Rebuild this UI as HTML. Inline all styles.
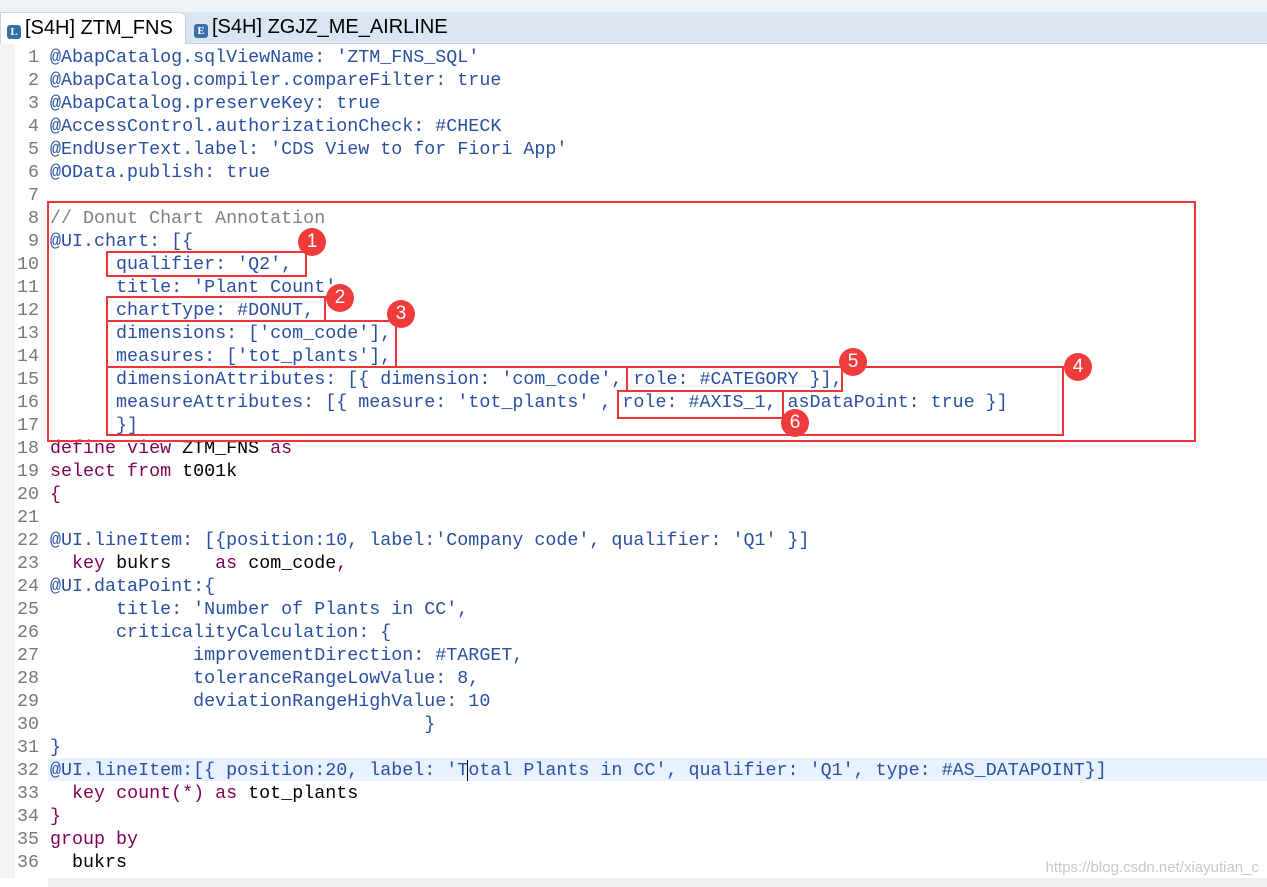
<!DOCTYPE html>
<html><head><meta charset="utf-8"><style>
body{margin:0;width:1267px;height:887px;overflow:hidden;background:#fff;position:relative;font-family:"Liberation Sans",sans-serif}
.top{position:absolute;left:0;top:0;width:1267px;height:12px;background:#eef1f6}
.tabbar{position:absolute;left:0;top:12px;width:1267px;height:31px;background:#dbe5f1;border-bottom:1px solid #c9d4e2}
.tab{position:absolute;top:0;height:31px;font-size:20px;line-height:31px;color:#000}
.t1{left:0;width:184px;background:#fff;border:1px solid #c9d4e2;border-bottom:none;border-radius:0 6px 0 0}
.ic{display:inline-block;width:14px;height:14px;border-radius:3px;background:#3a6ea8;color:#fff;font-size:11px;line-height:14px;text-align:center;vertical-align:-1px;margin:0 4px 0 6px;font-family:"Liberation Serif",serif;font-weight:bold}
.gut{position:absolute;left:0;top:44px;width:15px;height:834px;background:#f3f3f3}
.code{position:absolute;left:0;top:46px;font-family:"Liberation Mono",monospace;font-size:18.35px;line-height:23px;white-space:pre;margin:0}
.ln{position:absolute;left:0;top:46px;width:39px;text-align:right;font-family:"Liberation Mono",monospace;font-size:18.35px;line-height:23px;color:#787878;white-space:pre;margin:0}
.a{color:#2a4fa0}.k{color:#7f0055}.c{color:#808080}
.hl{position:absolute;left:48px;top:758px;width:1219px;height:23px;background:#e8f2fe}
.box{position:absolute;border:2.5px solid #f0353a}
.n{position:absolute;width:28px;height:28px;border-radius:50%;background:#ef3b3b;color:#fff;font-size:19px;line-height:28px;text-align:center}
.sb{position:absolute;left:48px;top:878px;width:1219px;height:9px;background:#f0f0f0}
</style></head><body>
<div class="top"></div>
<div class="tabbar">
<div class="tab t1"><span class="ic">L</span>[S4H] ZTM_FNS <span style="font-size:13px;color:#666">⊠</span></div>
<div class="tab" style="left:188px"><span class="ic">E</span>[S4H] ZGJZ_ME_AIRLINE</div>
</div>
<div class="gut"></div>
<div class="hl"></div>
<pre class="ln">1
2
3
4
5
6
7
8
9
10
11
12
13
14
15
16
17
18
19
20
21
22
23
24
25
26
27
28
29
30
31
32
33
34
35
36</pre>
<pre class="code" style="left:50px"><span class="a">@AbapCatalog.sqlViewName: 'ZTM_FNS_SQL'
@AbapCatalog.compiler.compareFilter: true
@AbapCatalog.preserveKey: true
@AccessControl.authorizationCheck: #CHECK
@EndUserText.label: 'CDS View to for Fiori App'
@OData.publish: true
</span>
<span class="c">// Donut Chart Annotation</span>
<span class="a">@UI.chart: [{
      qualifier: 'Q2',
      title: 'Plant Count',
      chartType: #DONUT,
      dimensions: ['com_code'],
      measures: ['tot_plants'],
      dimensionAttributes: [{ dimension: 'com_code', role: #CATEGORY }],
      measureAttributes: [{ measure: 'tot_plants' , role: #AXIS_1, asDataPoint: true }]
      }]</span>
<span class="k">define view</span> ZTM_FNS <span class="k">as</span>
<span class="k">select from</span> t001k
<span class="k">{</span>

<span class="a">@UI.lineItem: [{position:10, label:'Company code', qualifier: 'Q1' }]</span>
  <span class="k">key</span> bukrs    <span class="k">as</span> com_code<span class="k">,</span>
<span class="a">@UI.dataPoint:{
      title: 'Number of Plants in CC',
      criticalityCalculation: {
             improvementDirection: #TARGET,
             toleranceRangeLowValue: 8,
             deviationRangeHighValue: 10
                                  }
}
@UI.lineItem:[{ position:20, label: 'T<span style="border-left:1px solid #000;margin-left:-1px"></span>otal Plants in CC', qualifier: 'Q1', type: #AS_DATAPOINT}]</span>
  <span class="k">key count(*) as</span> tot_plants
<span class="k">}
group by</span>
  bukrs</pre>
<div class="box" style="left:47px;top:201px;width:1145px;height:237px"></div>
<div class="box" style="left:106px;top:251px;width:197px;height:22px"></div>
<div class="box" style="left:106px;top:296px;width:216px;height:22px"></div>
<div class="box" style="left:106px;top:320px;width:287px;height:44px"></div>
<div class="box" style="left:106px;top:366px;width:954px;height:66px"></div>
<div class="box" style="left:626px;top:366px;width:213px;height:22px"></div>
<div class="box" style="left:617px;top:390px;width:163px;height:25px"></div>
<div class="n" style="left:298px;top:228px">1</div>
<div class="n" style="left:326px;top:284px">2</div>
<div class="n" style="left:387px;top:300px">3</div>
<div class="n" style="left:1064px;top:353px">4</div>
<div class="n" style="left:839px;top:348px">5</div>
<div class="n" style="left:781px;top:409px">6</div>
<div class="sb"></div>
<div style="position:absolute;right:8px;top:859px;font-size:15px;color:#c8c8c8">https://blog.csdn.net/xiayutian_c</div>
</body></html>
